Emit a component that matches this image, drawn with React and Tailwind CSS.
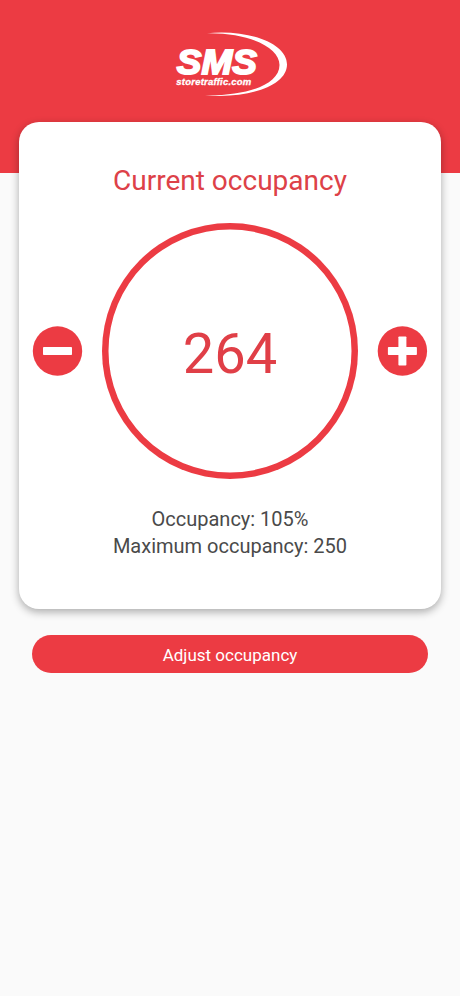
function Logo() {
  return (
    <svg className="mt-[30px] block" width="116" height="70" viewBox="0 0 116 70" fill="#fff" role="img" aria-label="SMS storetraffic.com">
      <path d="M35 3.2 C76 -1 115 13 115 34.5 C115 56 76 69 33 65.3 C74 66 107.500 55 107.500 35 C107.500 17 76 2.500 35 3.200 Z" />
      <text x="4.800" y="44.300" fontFamily="Liberation Sans, Arial, sans-serif" fontWeight="700" fontStyle="italic" fontSize="35.500" textLength="80" lengthAdjust="spacingAndGlyphs" stroke="#fff" strokeWidth="1.900">SMS</text>
      <text x="4.300" y="54.900" fontFamily="Liberation Sans, Arial, sans-serif" fontWeight="700" fontStyle="italic" fontSize="9.500" textLength="75" lengthAdjust="spacing" stroke="#fff" strokeWidth="0.300">storetraffic.com</text>
    </svg>
  );
}

function RoundButton({ label, cx, plus }) {
  return (
    <button aria-label={label} className="block size-[50px] shrink-0">
      <svg className="overflow-visible" width="50" height="50" viewBox="0 0 50 50">
        <circle cx={cx} cy="25" r="24.700" fill="#ec3b43" />
        <rect x={cx - 14.5} y="21" width="29" height="8" rx="0.800" fill="#fff" />
        {plus && <rect x={cx - 4} y="10.500" width="8" height="29" rx="0.800" fill="#fff" />}
      </svg>
    </button>
  );
}

export default function App() {
  return (
    <div className="flex h-[996px] w-[460px] flex-col overflow-hidden bg-[#fafafa] font-['Roboto',sans-serif]">
      <header className="flex h-[173px] shrink-0 justify-center bg-[#ec3b43]">
        <Logo />
      </header>
      <main className="z-10 -mt-[51px] flex flex-col">
        <section className="mx-[19px] flex h-[487px] flex-col items-center rounded-[20px] bg-white shadow-[0_3px_8px_rgba(0,0,0,0.32)]">
          <h1 className="mt-[40px] h-[37px] text-[28px] leading-[37px] whitespace-nowrap text-[#dd4148]">Current occupancy</h1>
          <div className="mt-[24px] flex w-full items-center justify-between px-[13px]">
            <RoundButton label="Decrease" cx={25.5} />
            <div className="flex size-[256px] items-center justify-center rounded-full pt-[6px] text-[56px] leading-none text-[#e03f47] shadow-[inset_0_0_0_6.5px_#ec3b43]">264</div>
            <RoundButton label="Increase" cx={24.4} plus />
          </div>
          <div className="mt-[27px] text-center text-[20px] leading-[27px] whitespace-nowrap text-[#4a4a4a]">
            <p>Occupancy: 105%</p>
            <p>Maximum occupancy: 250</p>
          </div>
        </section>
        <button className="mx-[32px] mt-[26px] flex h-[38px] items-center justify-center rounded-full bg-[#ec3b43] pt-[3px] text-[17px] text-white">Adjust occupancy</button>
      </main>
    </div>
  );
}
